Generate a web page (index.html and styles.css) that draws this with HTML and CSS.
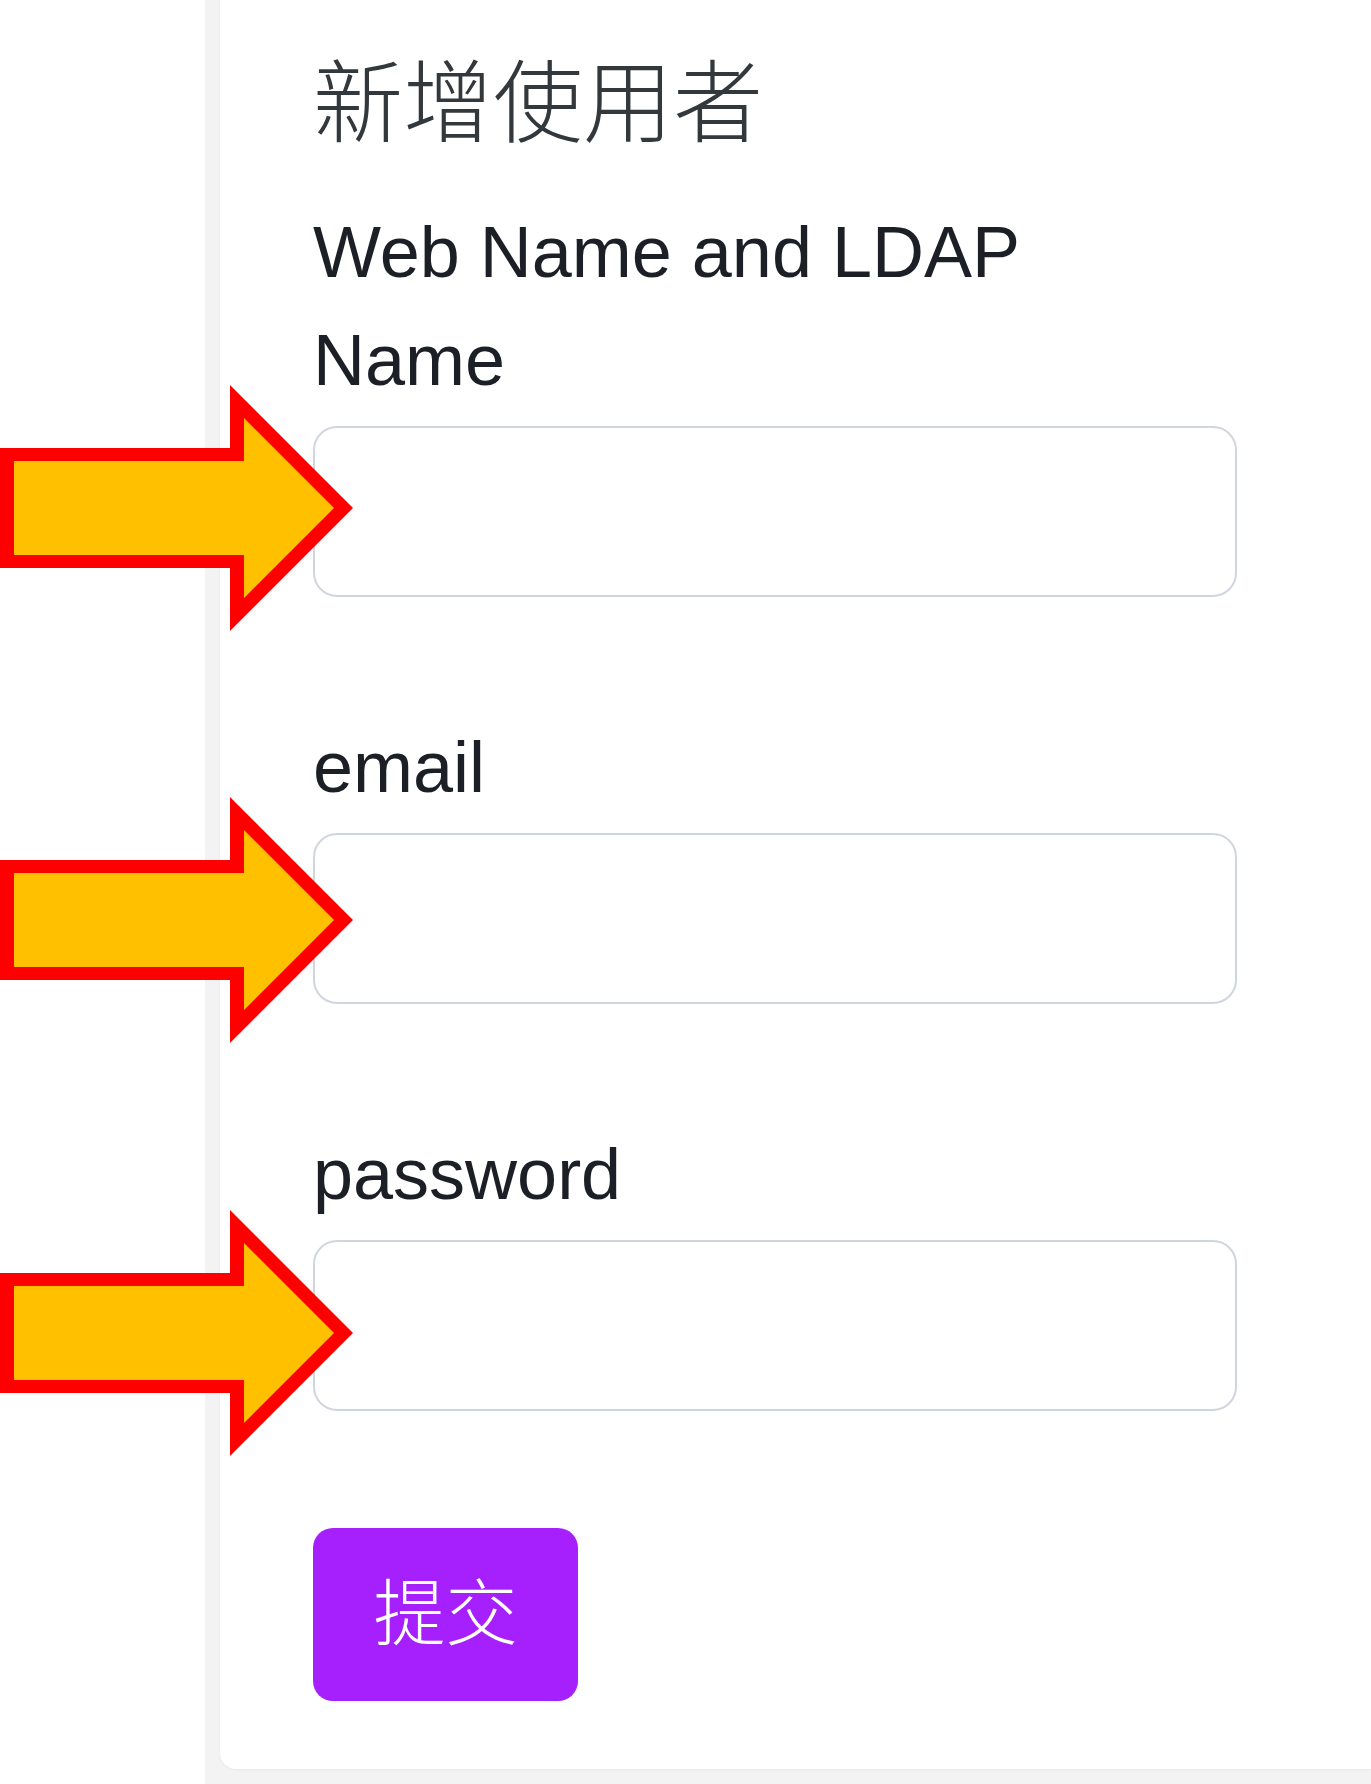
FILE: index.html
```html
<!DOCTYPE html>
<html lang="zh-Hant">
<head>
<meta charset="utf-8">
<title>新增使用者</title>
<link rel="stylesheet" href="styles.css">
</head>
<body>
<div class="page">
  <aside class="sidebar"></aside>
  <main class="main">
    <section class="card">
      <h2 class="title">新增使用者</h2>
      <h3 class="subtitle">Web Name and LDAP</h3>
      <form class="form">
        <div class="field">
          <label class="label" for="name">Name</label>
          <input class="input" id="name" type="text">
        </div>
        <div class="field">
          <label class="label" for="email">email</label>
          <input class="input" id="email" type="email">
        </div>
        <div class="field field-last">
          <label class="label" for="password">password</label>
          <input class="input" id="password" type="password">
        </div>
        <button class="submit" type="button">提交</button>
      </form>
    </section>
  </main>

  <svg class="arrow arrow-1" viewBox="0 0 360 250" width="360" height="250">
    <polygon class="arrow-outer" points="0,63 230,63 230,0 353,123 230,246 230,183 0,183"/>
    <polygon class="arrow-inner" points="14,76 244,76 244,33 334,123 244,213 244,170 14,170"/>
  </svg>
  <svg class="arrow arrow-2" viewBox="0 0 360 250" width="360" height="250">
    <polygon class="arrow-outer" points="0,63 230,63 230,0 353,123 230,246 230,183 0,183"/>
    <polygon class="arrow-inner" points="14,76 244,76 244,33 334,123 244,213 244,170 14,170"/>
  </svg>
  <svg class="arrow arrow-3" viewBox="0 0 360 250" width="360" height="250">
    <polygon class="arrow-outer" points="0,63 230,63 230,0 353,123 230,246 230,183 0,183"/>
    <polygon class="arrow-inner" points="14,76 244,76 244,33 334,123 244,213 244,170 14,170"/>
  </svg>
</div>
</body>
</html>
```

FILE: styles.css
```css
html, body {
  margin: 0;
  padding: 0;
  background: #ffffff;
  overflow: hidden;
}

.page {
  position: relative;
  display: flex;
  width: 1371px;
  min-height: 1784px;
  font-family: "Liberation Sans", Arial, "Noto Sans CJK TC", sans-serif;
  color: #1c2026;
}

.sidebar {
  width: 205px;
  flex: 0 0 205px;
  background: #ffffff;
}

.main {
  flex: 1;
  background: #f3f3f4;
  padding: 0 0 16px 15px;
}

.card {
  background: #ffffff;
  border-radius: 0 0 0 16px;
  box-shadow: 0 1px 3px rgba(0, 0, 0, 0.05);
  padding: 29px 0 68px 93px;
}

.title {
  margin: 0;
  font-family: "Noto Sans CJK TC", "Noto Sans CJK SC", sans-serif;
  font-size: 90px;
  line-height: 135px;
  font-weight: 300;
  color: #33383d;
}

.subtitle {
  margin: 34px 0 0;
  font-size: 72px;
  line-height: 108px;
  font-weight: 400;
  color: #1c2026;
}

.form {
  display: flex;
  flex-direction: column;
  align-items: flex-start;
}

.field {
  display: flex;
  flex-direction: column;
  margin-bottom: 116px;
}

.field-last {
  margin-bottom: 117px;
}

.label {
  font-size: 72px;
  line-height: 108px;
  margin-bottom: 12px;
  color: #1c2026;
}

.input {
  box-sizing: border-box;
  width: 924px;
  height: 171px;
  border: 2px solid #d1d6de;
  border-radius: 24px;
  background: #ffffff;
  margin: 0;
  padding: 0 30px;
  font-size: 72px;
  font-family: "Liberation Sans", Arial, sans-serif;
  outline: none;
}

.submit {
  box-sizing: border-box;
  width: 265px;
  height: 173px;
  border: none;
  border-radius: 20px;
  background: #a61ffd;
  color: #ffffff;
  font-family: "Noto Sans CJK TC", "Noto Sans CJK SC", sans-serif;
  font-size: 72px;
  font-weight: 300;
  line-height: 108px;
  padding: 0 0 14px;
  cursor: pointer;
}

.arrow {
  position: absolute;
  left: 0;
}

.arrow-1 { top: 385px; }
.arrow-2 { top: 797px; }
.arrow-3 { top: 1210px; }

.arrow-outer { fill: #ff0000; }
.arrow-inner { fill: #ffc000; }
```
